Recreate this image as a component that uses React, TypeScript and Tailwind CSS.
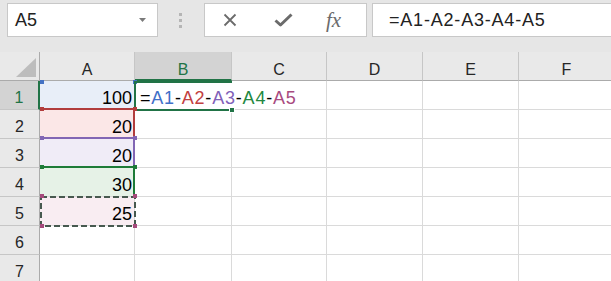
import React from 'react';

const COLS = ['A', 'B', 'C', 'D', 'E', 'F'];
const ROWS = [1, 2, 3, 4, 5, 6, 7];

type RangeCell = {
  value: string;
  fill: string;
  outline: string; // range outline, drawn over the gridlines
  handle: string; // colour of the small corner handles
  top: string; // offset of the top handles
  copied?: boolean; // marching ants round the copied cell
};

const RANGES: Record<number, RangeCell> = {
  1: { value: '100', fill: 'bg-[#e8eef8]', outline: '', handle: 'bg-[#4472c4]', top: '-top-[1px]' },
  2: {
    value: '20',
    fill: 'bg-[#fbe7e7]',
    outline: 'left-0 -top-[2px] -right-[1px] -bottom-[1px] border-t-2 border-r-2 border-[#b23d3d]',
    handle: 'bg-[#b23d3d]',
    top: '-top-[3px]',
  },
  3: {
    value: '20',
    fill: 'bg-[#f0ecf7]',
    outline: 'left-0 -top-[2px] -right-[1px] -bottom-[1px] border-t-2 border-r-2 border-[#8266b4]',
    handle: 'bg-[#8266b4]',
    top: '-top-[3px]',
  },
  4: {
    value: '30',
    fill: 'bg-[#e6f2e7]',
    outline: 'left-0 -top-[2px] -right-[1px] -bottom-[1px] border-t-2 border-r-2 border-[#1e7b38]',
    handle: 'bg-[#1e7b38]',
    top: '-top-[3px]',
  },
  5: {
    value: '25',
    fill: 'bg-[#f9edf2]',
    outline: '',
    handle: 'bg-[#a54a7c]',
    top: '-top-[3px]',
    copied: true,
  },
};

const Toolbar: React.FC = () => (
  <div className="h-[52px] bg-[#e6e6e6] flex items-start pt-[3px]">
    <div className="ml-[7px] w-[151px] h-[34px] bg-white border border-[#c8c8c8] flex items-center justify-between pl-[7px] pr-[11px]">
      <span className="text-[18px] leading-none text-[#222]">A5</span>
      <svg width="7" height="4" viewBox="0 0 7 4">
        <path d="M0 0h7L3.5 4z" fill="#7a7a7a" />
      </svg>
    </div>
    <div className="ml-[21px] mt-[10px] flex flex-col gap-[3px]">
      <span className="w-[3px] h-[3px] bg-[#b5b5b5]" />
      <span className="w-[3px] h-[3px] bg-[#b5b5b5]" />
      <span className="w-[3px] h-[3px] bg-[#b5b5b5]" />
    </div>
    <div className="ml-[22px] w-[163px] h-[34px] bg-white border border-[#c8c8c8] flex items-center">
      <svg className="ml-[18px]" width="14" height="14" viewBox="0 0 14 14">
        <path d="M1.5 1.5l11 11M12.5 1.5l-11 11" stroke="#6b6b6b" strokeWidth="1.8" />
      </svg>
      <svg className="ml-[37px]" width="19" height="14" viewBox="0 0 19 14">
        <path d="M1.5 7.5l5 4.5L17.5 1.5" fill="none" stroke="#6b6b6b" strokeWidth="3" strokeLinejoin="round" />
      </svg>
      <span className="ml-[33px] font-['Liberation_Serif',serif] italic text-[21px] leading-none text-[#6b6b6b]">fx</span>
    </div>
    <div className="ml-[5px] flex-1 h-[34px] bg-white border border-r-0 border-[#c8c8c8] flex items-center pl-[16px]">
      <span className="text-[18px] leading-none tracking-[0.8px] text-[#222]">=A1-A2-A3-A4-A5</span>
    </div>
  </div>
);

const ColumnA: React.FC<{ row: number }> = ({ row }) => {
  const c = RANGES[row];
  if (!c) return <div className="border-r border-b border-[#dadada]" />;
  return (
    <div className={`relative border-r border-b border-[#dadada] ${c.fill} flex items-end justify-end pr-[2px] pb-[2px] text-[18px] leading-none text-black`}>
      {c.value}
      {c.outline && <div className={`absolute ${c.outline}`} />}
      {c.copied && (
        <svg className="absolute left-0 -top-[1px]" width="96" height="31" viewBox="0 0 96 31">
          <rect x="1" y="1" width="94" height="29" fill="none" stroke="#47594f" strokeWidth="2" strokeDasharray="6 3" />
        </svg>
      )}
      <span className={`absolute left-0 ${c.top} w-[4px] h-[4px] ${c.handle}`} />
      <span className={`absolute -right-[3px] ${c.top} w-[4px] h-[4px] ${c.handle}`} />
      {c.copied && <span className={`absolute left-0 -bottom-[3px] w-[4px] h-[4px] ${c.handle}`} />}
      {c.copied && <span className={`absolute -right-[3px] -bottom-[3px] w-[4px] h-[4px] ${c.handle}`} />}
    </div>
  );
};

const ActiveCell: React.FC = () => (
  <div className="relative border-r border-b border-r-transparent border-b-[#dadada] flex items-end pl-[5px] pb-[2px] whitespace-nowrap text-[18px] leading-none tracking-[0.8px] text-black">
    <div className="absolute -left-[1px] top-0 -right-[1px] -bottom-[2px] border-t-2 border-l-2 border-b-2 border-[#217346]">
      <span className="absolute -right-[3px] -bottom-[4px] w-[6px] h-[6px] bg-[#217346] border border-white" />
    </div>
    <span className="relative">=</span>
    <span className="relative text-[#3f6fc8]">A1</span>
    <span className="relative">-</span>
    <span className="relative text-[#c2403f]">A2</span>
    <span className="relative">-</span>
    <span className="relative text-[#8160b8]">A3</span>
    <span className="relative">-</span>
    <span className="relative text-[#22873f]">A4</span>
    <span className="relative">-</span>
    <span className="relative text-[#a84a80]">A5</span>
    <span className="relative self-center w-px h-[25px] bg-black" />
  </div>
);

const Sheet: React.FC = () => (
  <div className="grid grid-cols-[40px_95px_97px_95px_96px_96px_96px] auto-rows-[29px] text-[#262626]">
    <div className="bg-[#e9e9e9] border-r border-b border-r-[#ababab] border-b-[#ababab] flex items-end justify-end pr-[3px] pb-[3px]">
      <svg width="20" height="19" viewBox="0 0 20 19">
        <path d="M20 0V19H0z" fill="#bdbdbd" />
      </svg>
    </div>
    {COLS.map((c) =>
      c === 'B' ? (
        <div key={c} className="bg-[#d3d3d3] border-r border-b-2 border-r-[#c6c6c6] border-b-[#217346] flex items-end justify-center pb-[1px] text-[16px] leading-none text-[#217346]">
          {c}
        </div>
      ) : (
        <div key={c} className="bg-[#e9e9e9] border-r border-b border-r-[#c6c6c6] border-b-[#ababab] flex items-end justify-center pb-[2px] text-[16px] leading-none">
          {c}
        </div>
      )
    )}
    {ROWS.map((r) => (
      <React.Fragment key={r}>
        {r === 1 ? (
          <div className="bg-[#d3d3d3] border-r-2 border-b border-r-[#217346] border-b-[#c6c6c6] flex items-end justify-center pb-[3px] text-[16px] leading-none text-[#217346]">
            {r}
          </div>
        ) : (
          <div className="bg-[#e9e9e9] border-r border-b border-r-[#ababab] border-b-[#c6c6c6] flex items-end justify-center pb-[3px] text-[16px] leading-none">
            {r}
          </div>
        )}
        <ColumnA row={r} />
        {r === 1 ? <ActiveCell /> : <div className="border-r border-b border-[#dadada]" />}
        <div className="border-r border-b border-[#dadada]" />
        <div className="border-r border-b border-[#dadada]" />
        <div className="border-r border-b border-[#dadada]" />
        <div className="border-r border-b border-[#dadada]" />
      </React.Fragment>
    ))}
  </div>
);

export default function App() {
  return (
    <div className="w-[611px] h-[281px] overflow-hidden bg-white font-['Liberation_Sans',Arial,sans-serif]">
      <Toolbar />
      <Sheet />
    </div>
  );
}
